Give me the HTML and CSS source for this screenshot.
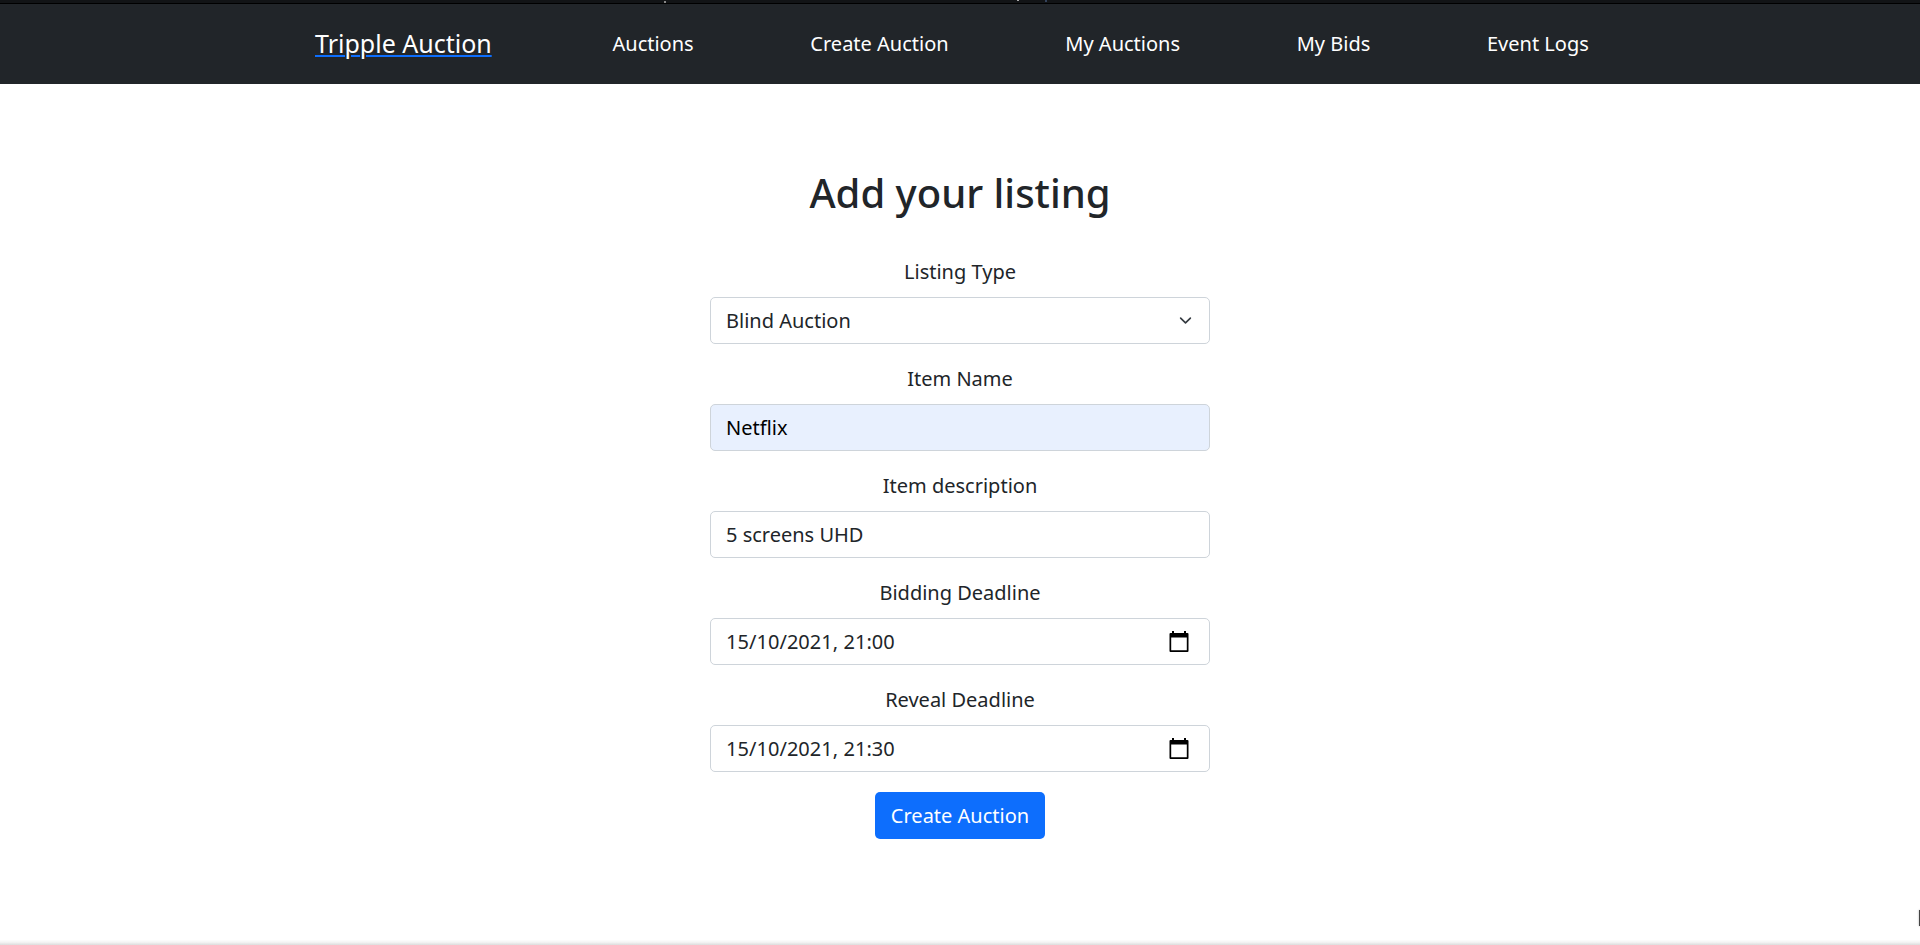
FILE: index.html
```html
<!DOCTYPE html>
<html lang="en">
<head>
<meta charset="utf-8">
<title>Tripple Auction</title>
<link rel="stylesheet" href="styles.css">
</head>
<body>
<div class="page">
  <div class="top-edge"></div>
  <nav class="navbar">
    <a class="brand">Tripple Auction</a>
    <div class="links">
      <a>Auctions</a>
      <a>Create Auction</a>
      <a>My Auctions</a>
      <a>My Bids</a>
      <a>Event Logs</a>
    </div>
  </nav>
  <main class="form">
    <h1 class="title">Add your listing</h1>
    <div class="group">
      <div class="label">Listing Type</div>
      <div class="control">
        <span>Blind Auction</span>
        <svg class="chevron" viewBox="0 0 16 16"><path d="M2 5l6 6 6-6" fill="none" stroke="#343a40" stroke-width="2" stroke-linecap="round" stroke-linejoin="round"/></svg>
      </div>
    </div>
    <div class="group">
      <div class="label">Item Name</div>
      <div class="control autofilled"><span>Netflix</span></div>
    </div>
    <div class="group">
      <div class="label">Item description</div>
      <div class="control"><span>5 screens UHD</span></div>
    </div>
    <div class="group">
      <div class="label">Bidding Deadline</div>
      <div class="control">
        <span class="date">15/10/2021, 21:00</span>
        <svg class="calendar" viewBox="0 0 20 21"><path fill-rule="evenodd" d="M3 0h2v2h10V0h2v2h1.500q1 0 1 1v17q0 1-1 1h-17q-1 0-1-1V3q0-1 1-1H3zM2.200 6.500v12.800h15.600V6.500z"/></svg>
      </div>
    </div>
    <div class="group">
      <div class="label">Reveal Deadline</div>
      <div class="control">
        <span class="date">15/10/2021, 21:30</span>
        <svg class="calendar" viewBox="0 0 20 21"><path fill-rule="evenodd" d="M3 0h2v2h10V0h2v2h1.500q1 0 1 1v17q0 1-1 1h-17q-1 0-1-1V3q0-1 1-1H3zM2.200 6.500v12.800h15.600V6.500z"/></svg>
      </div>
    </div>
    <button class="submit">Create Auction</button>
  </main>
  <div class="bottom-edge"></div>
  <div class="side-tab"></div>
</div>
</body>
</html>
```
FILE: styles.css
```css
* { box-sizing: border-box; }
body {
  margin: 0;
  background: #fff;
  color: #212529;
  font: 20px/30px "Noto Sans", sans-serif;
}
.page {
  position: relative;
  display: flex;
  flex-direction: column;
  height: 945px;
  overflow: hidden;
}
.top-edge {
  height: 4px;
  border-bottom: 1px solid #000;
  background:
    linear-gradient(#888, #888) 664px 1px / 2px 2px no-repeat,
    linear-gradient(#aaa, #aaa) 1017px 0 / 2px 1px no-repeat,
    linear-gradient(#34435c, #34435c) 1045px 0 / 2px 2px no-repeat,
    #121416;
}
.navbar {
  display: flex;
  align-items: center;
  height: 80px;
  padding-left: 315px;
  background: #212529;
  color: #fff;
  white-space: nowrap;
}
.brand {
  width: 297.5px;
  padding-bottom: 2px;
  font-size: 25px;
  text-decoration: underline 2px #0d6efd;
  text-underline-offset: 2px;
}
.links { display: flex; gap: 116.7px; }
.form {
  display: flex;
  flex-direction: column;
  align-items: center;
  flex: 1;
  width: 500px;
  margin: 0 auto;
  padding-top: 84px;
}
.title {
  margin: 0 0 39px;
  font-size: 40px;
  line-height: 50px;
  font-weight: 500;
}
.group { width: 100%; margin-bottom: 20px; }
.label { margin-bottom: 10px; text-align: center; }
.control {
  display: flex;
  align-items: center;
  justify-content: space-between;
  height: 47px;
  padding: 0 15px;
  border: 1px solid #ced4da;
  border-radius: 5px;
}
.autofilled { background: #e8f0fe; color: #000; }
.date { letter-spacing: 0.04px; }
.chevron { width: 13px; height: 13px; margin-right: 2px; }
.calendar { width: 20px; height: 21px; margin-right: 5px; }
.submit {
  height: 47px;
  padding: 0 16px;
  border: 0;
  border-radius: 5px;
  background: #0d6efd;
  color: #fff;
  font: inherit;
}
.bottom-edge {
  height: 5px;
  background: linear-gradient(#fdfdfd, #f4f4f4 45%, #dcdcdc);
}
.side-tab {
  position: absolute;
  right: 0;
  top: 910px;
  width: 1px;
  height: 16px;
  background: #444;
  box-shadow: 0 0 2px #888;
}
```
